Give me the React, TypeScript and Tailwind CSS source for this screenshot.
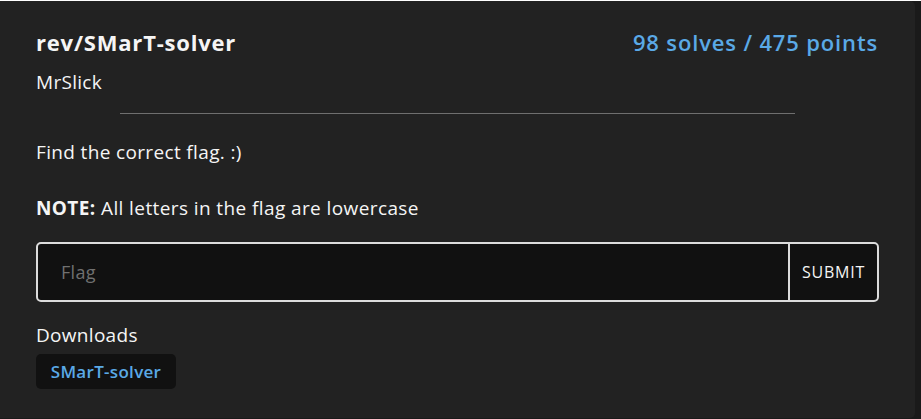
export default function App() {
  return (
    <div
      className="w-[921px] h-[419px] bg-[#1a1a1a] text-[#f5f5f5]"
      style={{ fontFamily: '"Open Sans", "Noto Sans", sans-serif' }}
    >
      <div className="w-[915px] h-[417px] mt-px bg-[#222222] rounded-r-[5px] px-9 pt-[26px]">
        <div className="flex justify-between items-start">
          <div>
            <h1 className="text-[22px] font-bold leading-[30px] tracking-[0.8px]">rev/SMarT-solver</h1>
            <p className="text-[19px] leading-[28px] mt-[11px] tracking-[0.3px]">MrSlick</p>
          </div>
          <div className="text-[22px] font-semibold text-[#5aa9e6] leading-[30px] tracking-[0.85px] mr-[1px]">
            98 solves / 475 points
          </div>
        </div>
        <hr className="w-4/5 mx-auto mt-[17px] border-0 border-t border-[#6f6f6f]" />
        <p className="text-[19px] leading-[28px] mt-[24px] tracking-[0.35px]">Find the correct flag. :)</p>
        <p className="text-[19px] leading-[28px] mt-[28px] tracking-[0.4px]">
          <b>NOTE:</b> All letters in the flag are lowercase
        </p>
        <div className="flex mt-[20px] h-[60px] border-2 border-[#dcdcdc] rounded-[5px] bg-[#111111] overflow-hidden">
          <input
            placeholder="Flag"
            className="flex-1 min-w-0 bg-transparent px-[23px] text-[18px] tracking-[0.3px] outline-none placeholder:text-[#707070]"
          />
          <button className="w-[89px] border-l-2 border-[#dcdcdc] text-[16px] tracking-[0.8px] text-[#f5f5f5]">
            SUBMIT
          </button>
        </div>
        <p className="text-[19px] leading-[28px] mt-[19px] tracking-[0.3px]">Downloads</p>
        <div className="mt-[5px] inline-flex items-center justify-center w-[140px] h-[35px] rounded-[5px] bg-[#111111] text-[#5aa9e6] font-semibold text-[17px] tracking-[0.3px]">
          SMarT-solver
        </div>
      </div>
    </div>
  );
}
